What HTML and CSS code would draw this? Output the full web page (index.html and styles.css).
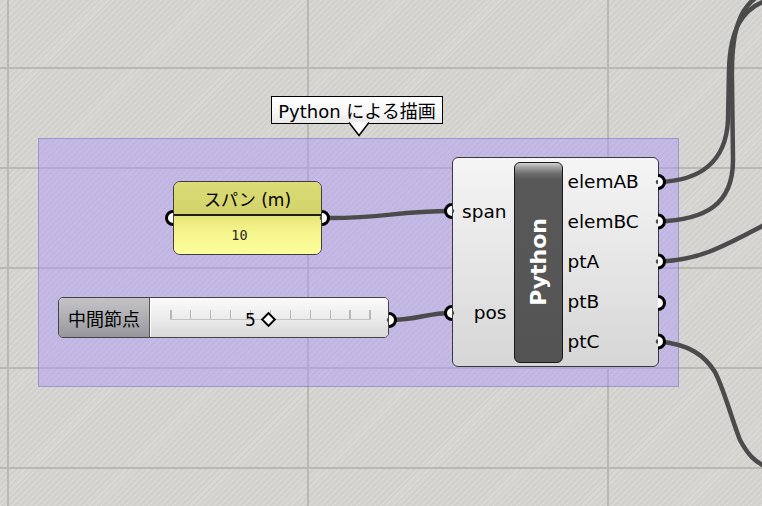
FILE: index.html
```html
<!DOCTYPE html>
<html>
<head>
<meta charset="utf-8">
<link rel="stylesheet" href="styles.css">
</head>
<body>
<div class="canvas">
  <div class="group"></div>

  <div class="tip">
    <span class="tip-text">Python による描画</span>
    <svg class="tip-arrow" width="22" height="15" viewBox="0 0 22 15">
      <polygon points="1,0 11,13.5 21,0" fill="#fbfbfb"/>
      <polyline points="1,0.5 11,13.5 21,0.5" fill="none" stroke="#000" stroke-width="1.5"/>
    </svg>
  </div>

  <div class="node param">
    <div class="param-head">スパン (m)</div>
    <div class="param-body">10</div>
  </div>

  <div class="node slider">
    <div class="slider-label">中間節点</div>
    <div class="slider-track">
      <div class="ticks">
        <i></i><i></i><i></i><i></i><i></i><i></i><i></i><i></i><i></i><i></i><i></i>
      </div>
      <div class="slider-value"><span>5</span><b class="diamond"></b></div>
    </div>
  </div>

  <div class="node comp">
    <div class="comp-in"><span>span</span><span>pos</span></div>
    <div class="comp-bar"><span>Python</span></div>
    <div class="comp-out">
      <span>elemAB</span><span>elemBC</span><span>ptA</span><span>ptB</span><span>ptC</span>
    </div>
  </div>

  <svg class="wires" width="762" height="506" viewBox="0 0 762 506">
    <g fill="none" stroke="#4b4b4b" stroke-width="4.5" stroke-linecap="round">
      <path d="M322,218 C385,219 392,211 452,211"/>
      <path d="M389,320 C420,320 425,313 452,313"/>
      <path d="M658,182 C700,181 726,162 728,120 L729,70 C730,30 742,8 768,0"/>
      <path d="M658,221.5 C705,220 733,205 733,160 L732,80 C731,30 740,5 762,-6"/>
      <path d="M658,261.5 C700,261 728,244 768,223"/>
      <path d="M658,341.5 C690,344 705,356 715,372 C725,392 732,420 740,440 C748,455 755,462 768,468"/>
    </g>
    <g fill="#fff" stroke="#000" stroke-width="3">
      <path d="M173,211.5 A6.5,6.5 0 0 0 173,224.5"/>
      <path d="M322,211.5 A6.5,6.5 0 0 1 322,224.5"/>
      <path d="M389,313.5 A6.5,6.5 0 0 1 389,326.5"/>
      <path d="M452,204.5 A6.5,6.5 0 0 0 452,217.5"/>
      <path d="M452,306.5 A6.5,6.5 0 0 0 452,319.5"/>
      <path d="M658,175.5 A6.5,6.5 0 0 1 658,188.5"/>
      <path d="M658,215 A6.5,6.5 0 0 1 658,228"/>
      <path d="M658,255 A6.5,6.5 0 0 1 658,268"/>
      <path d="M658,296.5 A6.5,6.5 0 0 1 658,309.5"/>
      <path d="M658,335 A6.5,6.5 0 0 1 658,348"/>
    </g>
  </svg>
</div>
</body>
</html>
```

FILE: styles.css
```css
body {
  margin: 0;
}

.canvas {
  position: relative;
  width: 762px;
  height: 506px;
  overflow: hidden;
  background-color: #d3d2ce;
  background-image:
    repeating-linear-gradient(to bottom, transparent 0 67px, #b9b8b3 67px 69px, transparent 69px 100px),
    repeating-linear-gradient(to right, transparent 0 7px, #b9b8b3 7px 9px, transparent 9px 300px),
    repeating-linear-gradient(135deg, #dad9d5 0 1.5px, #d2d1cd 1.5px 4.2px);
  font-family: "DejaVu Sans", "Noto Sans CJK JP", sans-serif;
  color: #000;
}

.group {
  position: absolute;
  left: 38px;
  top: 138px;
  width: 641px;
  height: 249px;
  box-sizing: border-box;
  background: rgba(170, 145, 255, 0.42);
  border: 1.5px solid rgba(110, 100, 150, 0.4);
}

/* tooltip */
.tip {
  position: absolute;
  left: 271px;
  top: 96px;
  width: 172px;
  height: 28px;
  box-sizing: border-box;
  border: 1.5px solid #000;
  background: linear-gradient(#ffffff, #f6f6f6 60%, #e9e9e9);
  display: flex;
  align-items: center;
  justify-content: center;
  font-size: 18px;
}

.tip-text {
  white-space: nowrap;
}

.tip-arrow {
  position: absolute;
  left: 76px;
  top: 24.5px;
}

.node {
  position: absolute;
  box-sizing: border-box;
}

/* number parameter */
.param {
  left: 173px;
  top: 181px;
  width: 149px;
  height: 74px;
  border: 1.5px solid #3e3e3e;
  border-radius: 7px;
  overflow: hidden;
  display: flex;
  flex-direction: column;
}

.param-head {
  height: 31px;
  flex: none;
  border-bottom: 2px solid #1e1e1e;
  background: linear-gradient(#dcdc78, #d3d36a);
  display: flex;
  align-items: center;
  justify-content: center;
  font-size: 17px;
  padding-top: 1px;
}

.param-body {
  flex: 1;
  background: linear-gradient(#e6e678, #f6f68e 45%, #fdfd9c);
  display: flex;
  align-items: center;
  justify-content: center;
  padding-right: 16px;
  font-family: "DejaVu Sans Mono", monospace;
  font-size: 13.5px;
  color: #2a2a2a;
}

/* slider */
.slider {
  left: 58px;
  top: 297px;
  width: 331px;
  height: 41px;
  border: 1.5px solid #444;
  border-radius: 5px;
  overflow: hidden;
  display: flex;
}

.slider-label {
  width: 90px;
  flex: none;
  background: linear-gradient(#c4c4c8, #aeaeb3 50%, #96969c);
  border-right: 1.5px solid #555;
  display: flex;
  align-items: center;
  justify-content: center;
  font-size: 18px;
}

.slider-track {
  flex: 1;
  display: grid;
  background: linear-gradient(#fafafa, #ececec 50%, #d9d9d9);
  border-left: 1px solid #fff;
}

.ticks {
  grid-area: 1 / 1;
  align-self: start;
  margin: 12px 17px 0 19px;
  height: 9px;
  display: flex;
  justify-content: space-between;
  border-bottom: 1.5px solid #c4c4c4;
}

.ticks i {
  width: 1.5px;
  background: #b8b8b8;
}

.slider-value {
  grid-area: 1 / 1;
  justify-self: start;
  align-self: center;
  margin-left: 94px;
  margin-top: 4px;
  display: flex;
  align-items: center;
  gap: 7px;
  font-size: 17px;
}

.diamond {
  width: 7px;
  height: 7px;
  background: #fff;
  border: 2.5px solid #000;
  transform: rotate(45deg);
}

/* python component */
.comp {
  left: 452px;
  top: 157px;
  width: 207px;
  height: 210px;
  border: 1.5px solid #3a3a3a;
  border-radius: 6px;
  background: linear-gradient(#f5f5f5, #e6e6e6 50%, #d6d6d6);
  padding: 3.5px 0;
  display: grid;
  grid-template-columns: 60.5px 49px 1fr;
  font-size: 18.5px;
}

.comp-in {
  display: flex;
  flex-direction: column;
}

.comp-in span {
  flex: 1;
  display: flex;
  align-items: center;
  justify-content: flex-end;
  padding-right: 7px;
}

.comp-bar {
  box-sizing: border-box;
  border: 1.5px solid #1a1a1a;
  border-radius: 6px;
  background: linear-gradient(#d0d0d0, #9a9a9a 5px, #6a6a6a 11px, #585858 17px, #545454);
  display: flex;
  align-items: center;
  justify-content: center;
}

.comp-bar span {
  writing-mode: vertical-rl;
  transform: rotate(180deg);
  color: #fff;
  font-weight: bold;
  font-size: 22px;
}

.comp-out {
  display: flex;
  flex-direction: column;
}

.comp-out span {
  height: 40px;
  display: flex;
  align-items: center;
  padding-left: 5px;
}

.wires {
  position: absolute;
  left: 0;
  top: 0;
  pointer-events: none;
}
```
